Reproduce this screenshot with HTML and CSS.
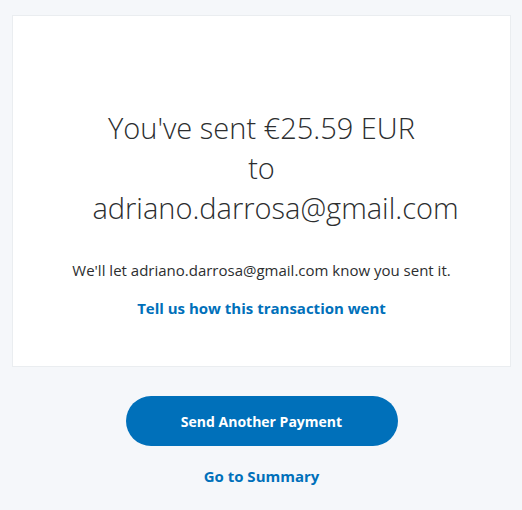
FILE: index.html
```html
<!DOCTYPE html>
<html lang="en">
<head>
    <meta charset="UTF-8">
    <meta name="viewport" content="width=device-width, initial-scale=1.0">
    <title>Payment sent</title>
    <link rel="stylesheet" href="styles.css">
</head>
<body>
    <div class="page">
        <div class="card">
            <h1 class="sent-title">You've sent €25.59 EUR<br>to<br><span class="sent-to">adriano.darrosa@gmail.com</span></h1>
            <p class="sent-note">We'll let adriano.darrosa@gmail.com know you sent it.</p>
            <a class="feedback-link" href="#">Tell us how this transaction went</a>
        </div>

        <div class="actions">
            <a class="btn-primary" href="#">Send Another Payment</a>
            <a class="summary-link" href="#">Go to Summary</a>
        </div>
    </div>
</body>
</html>
```

FILE: styles.css
```css
* {
    margin: 0;
    padding: 0;
    box-sizing: border-box;
}

body, html {
    font-family: "Open Sans", Arial, sans-serif;
    background-color: #f5f7fa;
    color: #2c2e2f;
}

.page {
    padding: 15px 11px 0 12px;
}

.card {
    background-color: #fff;
    border: 1px solid #eaedf0;
    height: 352px;
    display: flex;
    flex-direction: column;
    align-items: center;
    padding-top: 92px;
    text-align: center;
}

.sent-title {
    font-weight: 300;
    font-size: 29px;
    line-height: 40px;
    color: #2c2e2f;
}

.sent-to {
    padding-left: 28px; /* la línea del correo va algo desplazada */
}

.sent-note {
    font-size: 15px;
    margin-top: 32px;
}

.feedback-link {
    margin-top: 18px;
    font-size: 15px;
    font-weight: 700;
    color: #0070ba;
    text-decoration: none;
}

.actions {
    display: flex;
    flex-direction: column;
    align-items: center;
    padding-top: 29px;
}

.btn-primary {
    width: 272px;
    height: 50px;
    border-radius: 25px;
    background-color: #0070ba;
    color: #fff;
    font-size: 14px;
    font-weight: 700;
    text-decoration: none;
    display: flex;
    align-items: center;
    justify-content: center;
}

.summary-link {
    margin-top: 20px;
    font-size: 15px;
    font-weight: 700;
    color: #0070ba;
    text-decoration: none;
}
```
